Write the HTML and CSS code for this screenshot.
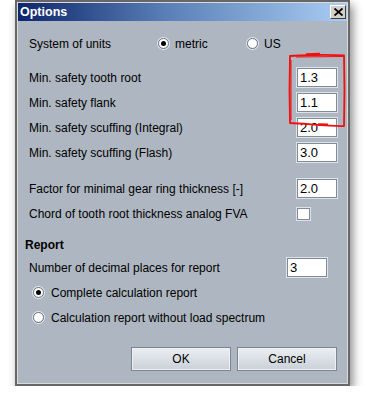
FILE: index.html
```html
<!DOCTYPE html>
<html lang="en">
<head>
    <meta charset="UTF-8">
    <title>Options</title>
    <link rel="stylesheet" href="styles.css">
</head>
<body>
    <div class="window">
        <div class="frame">
            <div class="titlebar">
                <span class="title">Options</span>
                <span class="close">
                    <svg width="9" height="8" viewBox="0 0 9 8"><path d="M0.5 0.5 L8.5 7.5 M8.5 0.5 L0.5 7.5" stroke="#000" stroke-width="1.8"/></svg>
                </span>
            </div>
            <div class="content">
                <div class="row units">
                    <span class="units-label">System of units</span>
                    <span class="choice metric"><span class="radio checked"></span>metric</span>
                    <span class="choice"><span class="radio"></span>US</span>
                </div>

                <div class="group">
                    <div class="row"><span>Min. safety tooth root</span><span class="field">1.3</span></div>
                    <div class="row"><span>Min. safety flank</span><span class="field">1.1</span></div>
                    <div class="row"><span>Min. safety scuffing (Integral)</span><span class="field">2.0</span></div>
                    <div class="row"><span>Min. safety scuffing (Flash)</span><span class="field">3.0</span></div>
                </div>

                <div class="group second">
                    <div class="row"><span>Factor for minimal gear ring thickness [-]</span><span class="field">2.0</span></div>
                    <div class="row"><span>Chord of tooth root thickness analog FVA</span><span class="check"></span></div>
                </div>

                <div class="section-title">Report</div>
                <div class="report">
                    <div class="row"><span>Number of decimal places for report</span><span class="field">3</span></div>
                    <div class="row option"><span class="radio checked"></span>Complete calculation report</div>
                    <div class="row option"><span class="radio"></span>Calculation report without load spectrum</div>
                </div>

                <div class="actions">
                    <button>OK</button>
                    <button>Cancel</button>
                </div>
            </div>
        </div>
    </div>

    <svg class="markup" width="366" height="400" viewBox="0 0 366 400">
        <path d="M290 56 C300 55 330 54.5 344 55.5 L344.5 90 L344 126 C330 126.5 305 123.5 290 123 L289.5 90 Z" fill="none" stroke="#f01010" stroke-width="1.8" stroke-linejoin="round"/>
        <path d="M296 57 L343 56.5" stroke="#f01010" stroke-width="1.2" fill="none"/>
        <path d="M306 54.5 L320 54" stroke="#f01010" stroke-width="2.5" fill="none"/>
        <path d="M318 124.5 L328 124.8" stroke="#f01010" stroke-width="2.5" fill="none"/>
        <path d="M291 60 L291 120" stroke="#f01010" stroke-width="1" fill="none"/>
    </svg>
</body>
</html>
```

FILE: styles.css
```css
body {
    margin: 0;
    background-color: #fff;
    font-family: "Liberation Sans", Arial, sans-serif;
    font-size: 12px;
    color: #000;
}

.window {
    margin-left: 15px;
    width: 335px;
    height: 386px;
    box-sizing: border-box;
    border: 2px solid #676767;
    box-shadow: 3px 5px 9px rgba(0, 0, 0, 0.45);
}

.frame {
    height: 100%;
    box-sizing: border-box;
    border: 1px solid #dadada;
    background-color: #aeb7c1;
    display: flex;
    flex-direction: column;
}

.titlebar {
    height: 18px;
    display: flex;
    align-items: center;
    justify-content: space-between;
    padding: 0 1px 0 2px;
    background: linear-gradient(to right, #0c266b, #5a7fb7 45%, #a9cdf2);
}

.title {
    color: #fff;
    font-weight: bold;
    font-size: 12.5px;
}

.close {
    width: 14px;
    height: 12px;
    margin-right: 0;
    background-color: #d4d0c8;
    border: 1px solid;
    border-color: #fff #404040 #404040 #fff;
    display: flex;
    align-items: center;
    justify-content: center;
}

.content {
    flex: 1;
    padding: 10px 10px 0 11px;
}

.row {
    height: 25px;
    display: flex;
    align-items: center;
    justify-content: space-between;
}

.units {
    justify-content: flex-start;
}

.units-label {
    width: 129px;
}

.choice {
    display: flex;
    align-items: center;
    gap: 6px;
}

.metric {
    width: 89px;
}

.radio {
    width: 9px;
    height: 9px;
    border-radius: 50%;
    border: 1px solid #6f7b88;
    background: radial-gradient(circle at 40% 35%, #fff 55%, #dde2e8);
    box-shadow: 0 0 0 1px #e4e8ec;
    position: relative;
    flex: none;
}

.radio.checked::after {
    content: "";
    position: absolute;
    left: 2px;
    top: 2px;
    width: 5px;
    height: 5px;
    border-radius: 50%;
    background-color: #000;
}

.group {
    margin-top: 9px;
}

.group.second {
    margin-top: 11px;
}

.field {
    width: 36px;
    height: 17px;
    line-height: 17px;
    padding-left: 2px;
    background-color: #fff;
    border: 1px solid #7f8b98;
    box-shadow: 0 0 0 1px #dde2e7;
    font-size: 13px;
}

.check {
    width: 11px;
    height: 10px;
    margin-right: 27px;
    background-color: #fff;
    border: 1px solid #7f8b98;
    box-shadow: 0 0 0 1px #dde2e7;
}

.section-title {
    margin-top: 9px;
    margin-left: -4px;
    height: 20px;
    line-height: 20px;
    font-weight: bold;
}

.report {
    padding-right: 10px;
}

.option {
    justify-content: flex-start;
    gap: 7px;
    padding-left: 4px;
}

.actions {
    margin-top: 17px;
    display: flex;
    justify-content: flex-end;
    gap: 6px;
}

button {
    width: 100px;
    height: 24px;
    font-family: "Liberation Sans", Arial, sans-serif;
    font-size: 12px;
    color: #000;
    border: 1px solid #7c8590;
    box-shadow: inset 0 0 0 1px #eef1f4;
    background: linear-gradient(#eceff2, #c9d0d8);
    padding: 0;
}

.markup {
    position: absolute;
    left: 0;
    top: 0;
    pointer-events: none;
}
```
